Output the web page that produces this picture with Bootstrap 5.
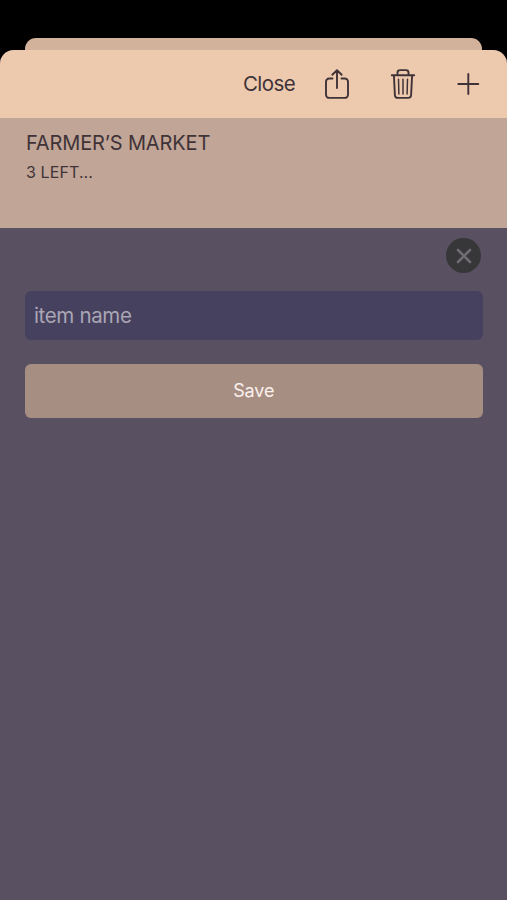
<!DOCTYPE html>
<html lang="en">
<head>
<meta charset="utf-8">
<meta name="viewport" content="width=device-width, initial-scale=1">
<title>Farmer’s Market</title>
<link href="https://cdn.jsdelivr.net/npm/bootstrap@5.3.0/dist/css/bootstrap.min.css" rel="stylesheet">
<style>
body{background:#000;font-family:Inter,"Liberation Sans",sans-serif;color:#403338;overflow:hidden}
.page{height:900px;padding-top:38px}
.back-sheet{height:12px;margin:0 25px;background:#d2b29a;border-radius:11px 11px 0 0}
.sheet{background:#595162;border-radius:14px 14px 0 0}
.toolbar{height:68px;background:#edc9ae;padding-right:27px}
.toolbar svg{display:block;fill:none;stroke:#403338;stroke-width:1.9;stroke-linecap:round;stroke-linejoin:round}
.btn-tool{padding:0;border:0;color:#403338;line-height:1}
.close-text{font-size:20.5px;letter-spacing:-.6px;margin-right:29px}
.share{margin-right:40px;margin-top:-1px}
.trash{margin-right:40px;margin-top:-1px}
.list-head{height:110px;background:#c1a596;padding:12px 26px}
.list-head h1{font-size:20px;line-height:27px;font-weight:400;letter-spacing:-.15px}
.list-head p{font-size:16px;line-height:24px;letter-spacing:.1px;margin-top:3px}
.entry{padding:10px 24.500px 0 25px}
.dismiss{width:35px;height:35px;background:#373638;margin-right:1.500px}
.item-input,.item-input:focus{height:49px;margin-top:17.500px;padding:0 9px;background:#46415f;border:0;border-radius:6px;font-size:20.500px;letter-spacing:-.35px;color:#e5e1e9;box-shadow:none}
.item-input::placeholder{color:#aaa6b4;opacity:1}
.save,.save:hover{height:54px;margin-top:24px;background:#a78e83;color:#fbf1ed;border:0;border-radius:6px;font-size:18px;letter-spacing:-.15px}
</style>
</head>
<body>
<div class="page d-flex flex-column">
  <div class="back-sheet flex-shrink-0"></div>
  <main class="sheet flex-grow-1 overflow-hidden">
    <nav class="toolbar d-flex align-items-center justify-content-end">
      <button class="btn btn-tool close-text">Close</button>
      <button class="btn btn-tool share" aria-label="Share">
        <svg width="26" height="32" viewBox="0 0 26 32"><path d="M8.500 10.500H5.200a3.200 3.200 0 0 0-3.200 3.200V26.700a3.200 3.200 0 0 0 3.200 3.200H20.800a3.200 3.200 0 0 0 3.200-3.200V13.700a3.200 3.200 0 0 0-3.200-3.200H17.500M13 20V2.200M8.300 6.700 13 2.200l4.700 4.500"/></svg>
      </button>
      <button class="btn btn-tool trash" aria-label="Delete">
        <svg width="26" height="32" viewBox="0 0 26 32"><path d="M1.800 7.300H24.200M7.500 7.300V4.600A2.500 2.500 0 0 1 10 2.100h6a2.500 2.500 0 0 1 2.500 2.500V7.300M3.900 7.300 4.900 27.200a2.900 2.900 0 0 0 2.900 2.700H18.200a2.900 2.900 0 0 0 2.900-2.700L22.100 7.300"/><path stroke-width="1.500" d="M8.500 11.200l.4 14.800M13 11.200v14.800M17.500 11.200l-.4 14.800"/></svg>
      </button>
      <button class="btn btn-tool" aria-label="Add">
        <svg width="24" height="24" viewBox="0 0 24 24"><path d="M12.300 2v20M2.300 12h20"/></svg>
      </button>
    </nav>
    <header class="list-head">
      <h1 class="mb-0">FARMER’S MARKET</h1>
      <p class="mb-0">3 LEFT...</p>
    </header>
    <section class="entry">
      <button class="btn dismiss rounded-circle border-0 p-0 d-flex align-items-center justify-content-center ms-auto" aria-label="Dismiss">
        <svg width="16" height="16" viewBox="0 0 16 16" fill="none" stroke="#6f6b72" stroke-width="2.600" stroke-linecap="round"><path d="M2 2l12 12M14 2 2 14"/></svg>
      </button>
      <input class="form-control item-input" type="text" placeholder="item name" aria-label="item name">
      <button class="btn save w-100">Save</button>
    </section>
  </main>
</div>
<script src="https://cdn.jsdelivr.net/npm/bootstrap@5.3.0/dist/js/bootstrap.bundle.min.js"></script>
</body>
</html>
